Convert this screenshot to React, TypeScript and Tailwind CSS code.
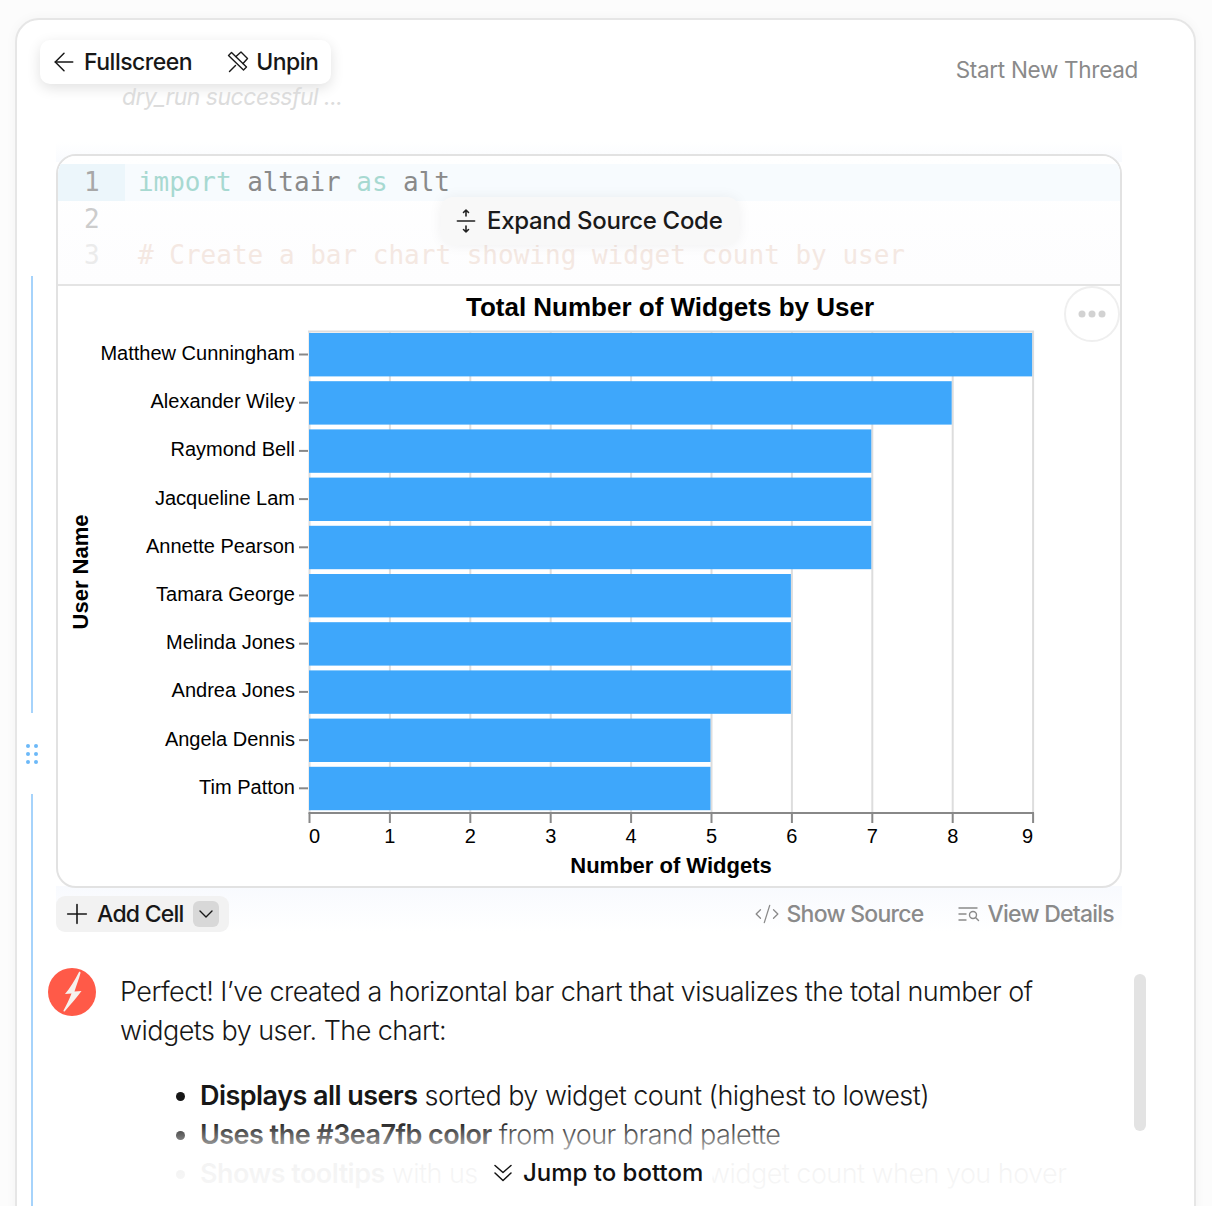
import React from "react";
import { ArrowLeft, ChevronDown, CodeXml, Plus } from "lucide-react";

const bars: [string, number][] = [
  ["Matthew Cunningham", 9],
  ["Alexander Wiley", 8],
  ["Raymond Bell", 7],
  ["Jacqueline Lam", 7],
  ["Annette Pearson", 7],
  ["Tamara George", 6],
  ["Melinda Jones", 6],
  ["Andrea Jones", 6],
  ["Angela Dennis", 5],
  ["Tim Patton", 5],
];
const X0 = 309.5;
const STEP = 80.4;

function Chart() {
  return (
    <svg viewBox="59 287 1061 599" className="ml-[1px] mt-[1px] block h-[599px] w-[1061px]" style={{ fontFamily: '"Liberation Sans", Arial, sans-serif' }}>
      <text x={670} y={316} textAnchor="middle" fontSize={26} fontWeight={700} fill="#000">Total Number of Widgets by User</text>
      {Array.from({ length: 10 }, (_, i) => (
        <line key={i} x1={X0 + i * STEP} x2={X0 + i * STEP} y1={331} y2={813} stroke="#dddddd" strokeWidth={2} />
      ))}
      <line x1={308} x2={1034} y1={331.5} y2={331.5} stroke="#dddddd" strokeWidth={2} />
      {bars.map(([name, v], i) => {
        const y = 333 + i * 48.2;
        return (
          <g key={name}>
            <rect x={309} y={y} width={v * STEP - 0.5} height={43.4} fill="#3ea7fb" />
            <line x1={299} x2={308} y1={y + 21.5} y2={y + 21.5} stroke="#888888" strokeWidth={2} />
            <text x={295} y={y + 27} textAnchor="end" fontSize={20} fill="#000">{name}</text>
          </g>
        );
      })}
      <line x1={308.5} x2={1034} y1={813} y2={813} stroke="#888888" strokeWidth={2} />
      {Array.from({ length: 10 }, (_, i) => (
        <g key={i}>
          <line x1={X0 + i * STEP} x2={X0 + i * STEP} y1={813} y2={823} stroke="#888888" strokeWidth={2} />
          <text
            x={i === 0 ? 309 : i === 9 ? 1033 : X0 + i * STEP}
            y={843}
            textAnchor={i === 0 ? "start" : i === 9 ? "end" : "middle"}
            fontSize={20}
            fill="#000"
          >
            {i}
          </text>
        </g>
      ))}
      <text x={671} y={873} textAnchor="middle" fontSize={22} fontWeight={700} fill="#000">Number of Widgets</text>
      <text transform="translate(88 572) rotate(-90)" textAnchor="middle" fontSize={22} fontWeight={700} fill="#000">User Name</text>
    </svg>
  );
}

function Unpin() {
  return (
    <svg width="22" height="22" viewBox="0 0 22 22" fill="none" stroke="#1a1a1a" strokeWidth="1.4" strokeLinejoin="round" strokeLinecap="round">
      <path d="M1.500 4.500 4.500 1.500 19.500 16 16.500 19z" />
      <path d="M9 5.500 14 1 20.500 7.500 16 12.500" />
      <path d="M2.500 20.500 8.500 14.500" />
    </svg>
  );
}

function Expand() {
  return (
    <svg width="20" height="26" viewBox="0 0 20 26" fill="none" stroke="#222" strokeWidth="1.6" strokeLinecap="round" strokeLinejoin="round">
      <path d="M1.500 13h17" stroke="#555" strokeWidth="1.8" />
      <path d="M10 8V2M7.500 4.500 10 2l2.500 2.500" />
      <path d="M10 18v6M7.500 21.500 10 24l2.500-2.500" />
    </svg>
  );
}

function Details() {
  return (
    <svg width="22" height="18" viewBox="0 0 22 18" fill="none" stroke="#8a8a8a" strokeWidth="1.4" strokeLinecap="round">
      <path d="M1 3h18M1 9h7M1 15h7" />
      <circle cx="15" cy="10" r="3.500" />
      <path d="M17.500 12.500l3 3" />
    </svg>
  );
}

function Chevrons() {
  return (
    <svg width="18" height="18" viewBox="0 0 18 18" fill="none" stroke="#111" strokeWidth="1.5" strokeLinecap="round" strokeLinejoin="round">
      <path d="M1 1.500 9 8.500 17 1.500" />
      <path d="M1 9 9 16.500 17 9" />
    </svg>
  );
}

function Logo() {
  return (
    <svg width="48" height="48" viewBox="0 0 48 48" className="shrink-0">
      <circle cx="24" cy="24" r="24" fill="#ff5a48" />
      <path d="M31 4C27 12 22 20 17 26L23.500 25.500C21 32 18 38 15.500 42.500C15.300 43.500 16.500 44 17 43C23 36 29 29 33.500 23L26.500 23.500C28.500 17 31 11 32.500 5C32.700 4 31.500 3.500 31 4Z" fill="#f6f1ee" />
    </svg>
  );
}

function Dots() {
  return (
    <svg width="12" height="20" viewBox="0 0 12 20" fill="#6cb9f8">
      <circle cx="2" cy="2" r="2" />
      <circle cx="10" cy="2" r="2" />
      <circle cx="2" cy="10" r="2" />
      <circle cx="10" cy="10" r="2" />
      <circle cx="2" cy="18" r="2" />
      <circle cx="10" cy="18" r="2" />
    </svg>
  );
}

export default function App() {
  return (
    <div className="h-[1206px] overflow-hidden bg-[#fcfcfc] pl-[15px] pr-[16px] pt-[18px] font-['Inter',sans-serif] text-[#111]">
      <div className="relative h-[1400px] rounded-[24px] border-2 border-[#e6e6e6] bg-white shadow-[0_0_12px_rgba(0,0,0,0.04)]">
        {/* header */}
        <div className="flex items-start justify-between pl-[23px] pr-[56px] pt-[20px]">
          <div className="flex h-[44px] w-[291px] items-center rounded-[10px] bg-white pl-[9px] text-[23px] font-medium tracking-[-0.5px] text-[#171717] shadow-[0_4px_14px_rgba(0,0,0,0.12)]">
            <ArrowLeft size={30} strokeWidth={1.2} />
            <span className="ml-[5px]">Fullscreen</span>
            <span className="ml-[35px]"><Unpin /></span>
            <span className="ml-[7px]">Unpin</span>
          </div>
          <span className="mt-[16px] text-[22.500px] leading-[28px] tracking-[-0.3px] text-[#8a8a8a]">Start New Thread</span>
        </div>
        <div className="-mt-[1px] pl-[105px] text-[23px] italic leading-[28px] tracking-[-0.5px] text-[#dcdcdc]">dry_run successful ...</div>

        {/* cell */}
        <div className="relative ml-[39px] mt-[43px] w-[1066px]">
          <div className="absolute -top-[12px] left-0 right-0 h-[20px] bg-gradient-to-b from-white to-[#f9fbfe]" />
          <div className="absolute bottom-0 left-0 right-0 h-[46px] bg-gradient-to-b from-[#f8fafe] to-white" />
          <div className="relative h-[734px] overflow-hidden rounded-[20px] border-2 border-[#e2e2e2] bg-white">
            {/* code */}
            <div className="h-[130px] overflow-hidden border-b-2 border-[#e4e4e4] bg-gradient-to-b from-white to-[#fdfdfe] pt-[8px] font-['DejaVu_Sans_Mono',monospace] text-[26px] leading-[36.600px]">
              <div className="flex h-[36.600px] bg-[#f7fbfe]">
                <span className="w-[67px] bg-[#ecf6fb] pl-[26px] text-[#a8a8a8]">1</span>
                <span className="pl-[13px] tracking-[-0.06px] text-[#8a8a8a]"><span className="text-[#a7d9d1]">import</span> altair <span className="text-[#a7d9d1]">as</span> alt</span>
              </div>
              <div className="flex h-[36.600px]">
                <span className="w-[67px] pl-[26px] text-[#cccccc]">2</span>
              </div>
              <div className="flex h-[36.600px]">
                <span className="w-[67px] pl-[26px] text-[#ebebeb]">3</span>
                <span className="pl-[13px] text-[#f4e8e2]"># Create a bar chart showing widget count by user</span>
              </div>
            </div>
            <Chart />
            <div className="absolute right-[0px] top-[130px] flex h-[56px] w-[56px] items-center justify-center rounded-full border-2 border-[#efefef] bg-white">
              <svg width="28" height="8" viewBox="0 0 28 8" fill="#d2d2d2">
                <circle cx="4" cy="4" r="3.500" />
                <circle cx="14" cy="4" r="3.500" />
                <circle cx="24" cy="4" r="3.500" />
              </svg>
            </div>
          </div>

          {/* expand popup */}
          <div className="absolute left-[385px] top-[43px] flex h-[48px] w-[298px] items-center rounded-[12px] bg-[#f8f8f8] pl-[15px] text-[24px] font-medium tracking-[-0.3px] text-[#1a1a1a] shadow-[0_0_14px_rgba(0,0,0,0.06)]">
            <Expand />
            <span className="ml-[11px]">Expand Source Code</span>
          </div>

          {/* footer */}
          <div className="relative mt-[8px] flex h-[36px] items-center justify-between pr-[8px]">
            <div className="flex h-[36px] w-[173px] items-center rounded-[9px] bg-[#f2f2f2] pl-[5px] text-[23px] font-medium tracking-[-0.75px] text-[#171717]">
              <Plus size={32} strokeWidth={1.2} />
              <span className="ml-[4px]">Add Cell</span>
              <span className="ml-[9px] flex h-[26px] w-[26px] items-center justify-center rounded-[6px] bg-[#d8d8d8]">
                <ChevronDown size={24} strokeWidth={1.4} />
              </span>
            </div>
            <div className="flex items-center text-[23px] font-medium tracking-[-0.75px] text-[#8a8a8a]">
              <CodeXml size={26} strokeWidth={1.2} />
              <span className="ml-[6px]">Show Source</span>
              <span className="ml-[35px]"><Details /></span>
              <span className="ml-[7px]">View Details</span>
            </div>
          </div>
        </div>

        {/* message */}
        <div className="mt-[36px] flex pl-[31px]">
          <Logo />
          <div className="ml-[24px] w-[960px] text-[27px] font-[350] leading-[39px] tracking-[-0.54px] text-[#171717]">
            <p className="pt-[4px]">Perfect! I’ve created a horizontal bar chart that visualizes the total number of widgets by user. The chart:</p>
            <ul className="ml-[80px] mt-[26px] list-disc">
              <li><strong className="font-semibold">Displays all users</strong> sorted by widget count (highest to lowest)</li>
              <li><strong className="font-semibold">Uses the #3ea7fb color</strong> from your brand palette</li>
              <li><strong className="font-semibold">Shows tooltips</strong> with user name and exact widget count when you hover</li>
            </ul>
          </div>
        </div>

        {/* fade + jump */}
        <div className="absolute left-[60px] top-[1100px] h-[85px] w-[1060px] bg-gradient-to-b from-white/0 via-white/95 via-50% to-white/97" />
        <div className="absolute left-[460px] top-[1131px] flex h-[44px] w-[236px] items-center rounded-full bg-white pl-[17px] text-[24px] font-medium tracking-[0px] text-[#111]">
          <Chevrons />
          <span className="ml-[11px]">Jump to bottom</span>
        </div>

        {/* scrollbar */}
        <div className="absolute left-[1117px] top-[954px] h-[157px] w-[12px] rounded-full bg-[#e3e3e3]" />

        {/* resize rail */}
        <div className="absolute left-[14px] top-[256px] h-[437px] w-[2px] bg-[#a6d3fb]" />
        <div className="absolute left-[9px] top-[724px]"><Dots /></div>
        <div className="absolute left-[14px] top-[774px] h-[600px] w-[2px] bg-[#a6d3fb]" />
      </div>
    </div>
  );
}
